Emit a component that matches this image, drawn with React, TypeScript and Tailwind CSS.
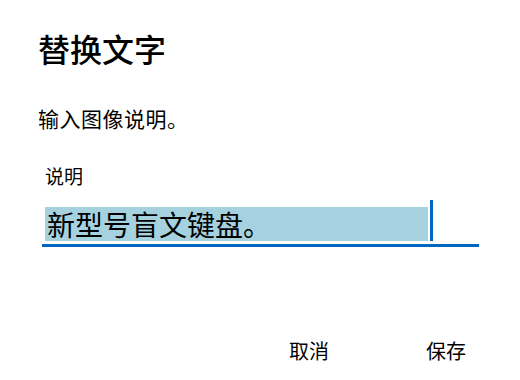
const font = { fontFamily: '"Noto Sans CJK SC", "Noto Sans", sans-serif' };

const App = () => {
  return (
    <div className="w-[520px] h-[380px] bg-white text-black flex flex-col overflow-hidden" style={font}>
      <div className="pt-[26px] pl-[38px]">
        <h1 className="text-[32px] leading-[44px] font-medium">替换文字</h1>
        <p className="mt-[34px] text-[21px] leading-[28px] tracking-[0.5px]">输入图像说明。</p>
        <label className="block mt-[32px] ml-[7px] text-[19px] leading-[24px]">说明</label>
        <div className="mt-[12px] ml-[4px] w-[437px] border-b-[3px] border-[#0067c0] pb-[3px]">
          <div className="flex items-end pl-[3px]">
            <span className="w-[383px] h-[34px] bg-[#a6d2e0] text-[28px] leading-[34px] pl-[2px] whitespace-nowrap">
              新型号盲文键盘。
            </span>
            <span className="w-[3px] h-[41px] ml-[2px] bg-[#0067c0]" />
          </div>
        </div>
      </div>
      <div className="mt-auto mb-[13px] flex justify-end pr-[14px] gap-[17px]">
        <button className="w-[120px] h-[32px] text-[20px] leading-[32px] text-center">取消</button>
        <button className="w-[120px] h-[32px] text-[20px] leading-[32px] text-center">保存</button>
      </div>
    </div>
  );
};

export default App;
